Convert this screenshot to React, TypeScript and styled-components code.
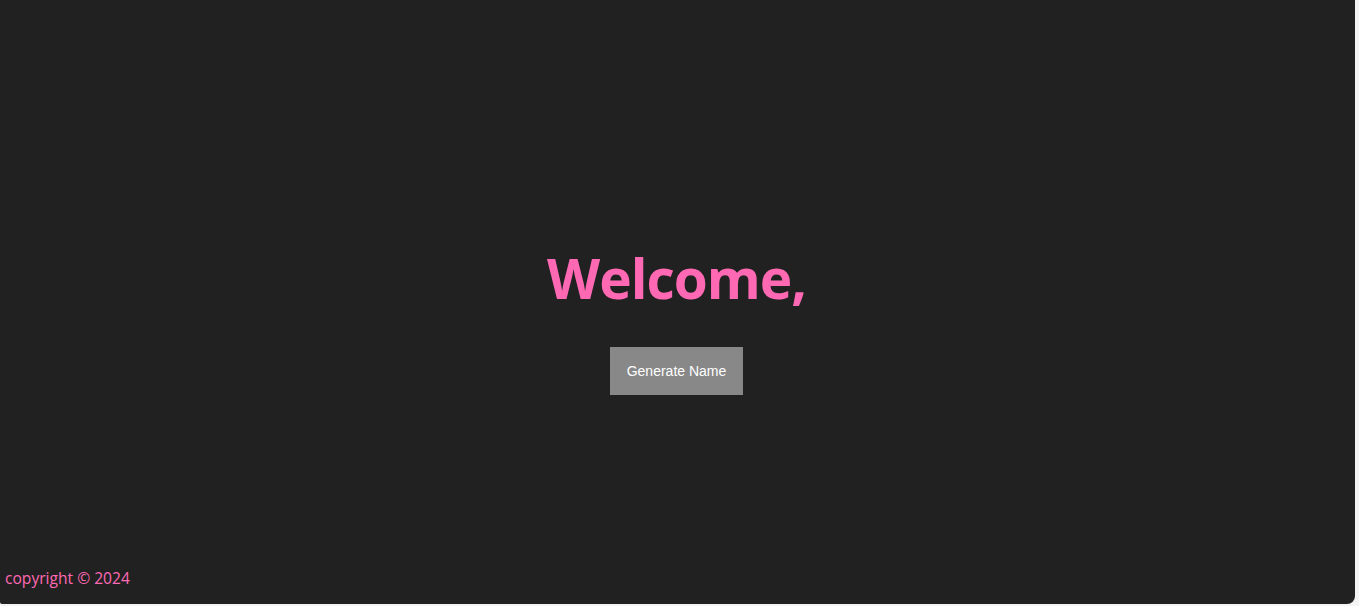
import React from "react";
import styled, { createGlobalStyle } from "styled-components";

const GlobalStyle = createGlobalStyle`
  html, body {
    margin: 0;
    padding: 0;
    background: #f4f4f4;
  }
  * {
    box-sizing: border-box;
  }
`;

const Page = styled.div`
  width: 1355px;
  height: 604px;
  background: #212121;
  border-radius: 0 0 8px 2px;
  display: flex;
  flex-direction: column;
  font-family: "Open Sans", "Noto Sans", sans-serif;
`;

const Main = styled.main`
  flex: 1;
  display: flex;
  flex-direction: column;
  align-items: center;
  justify-content: center;
  padding: 72px 2px 0 0;
`;

const Title = styled.h1`
  margin: 0 0 36px;
  font-size: 55px;
  line-height: 1.2;
  font-weight: 700;
  color: #ff69b4;
  letter-spacing: -1px;
`;

const GenerateButton = styled.button`
  height: 48px;
  padding: 0 17px;
  border: none;
  background: #888888;
  color: #ffffff;
  font-family: "Liberation Sans", Arial, sans-serif;
  font-size: 14px;
  cursor: pointer;
`;

const Footer = styled.footer`
  padding: 0 5px 15px;
  color: #ff69b4;
  font-size: 15.6px;
  line-height: 21px;
`;

export default function App() {
  return (
    <>
      <GlobalStyle />
      <Page>
        <Main>
          <Title>Welcome,</Title>
          <GenerateButton>Generate Name</GenerateButton>
        </Main>
        <Footer>copyright © 2024</Footer>
      </Page>
    </>
  );
}
